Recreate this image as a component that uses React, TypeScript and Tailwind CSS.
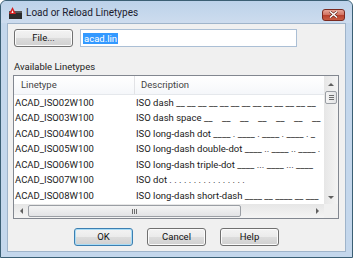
import React from 'react';

const rows = [
    { name: 'ACAD_ISO02W100', desc: 'ISO dash __ __ __ __ __ __ __ __ __ __ __ __ __' },
    { name: 'ACAD_ISO03W100', desc: 'ISO dash space __    __    __    __    __    __    __' },
    { name: 'ACAD_ISO04W100', desc: 'ISO long-dash dot ____ . ____ . ____ . ____ . _' },
    { name: 'ACAD_ISO05W100', desc: 'ISO long-dash double-dot ____ .. ____ .. ____ .' },
    { name: 'ACAD_ISO06W100', desc: 'ISO long-dash triple-dot ____ ... ____ ... ____' },
    { name: 'ACAD_ISO07W100', desc: 'ISO dot . . . . . . . . . . . . . . . .' },
    { name: 'ACAD_ISO08W100', desc: 'ISO long-dash short-dash ____ __ ____ __ ___' },
];

const Button = ({ label, primary }: { label: string; primary?: boolean }) => (
    <button
        className={
            'w-[59px] h-[18px] rounded-[3px] border text-[9.5px] text-[#111] leading-none bg-[linear-gradient(#f3f3f3_0%,#ebebeb_48%,#dcdcdc_52%,#d0d0d0_100%)] ' +
            (primary ? 'border-[#3c7fb1] shadow-[inset_0_0_0_1px_#a9dcf6]' : 'border-[#707070] shadow-[inset_0_0_0_1px_#fbfbfb]')
        }
    >
        {label}
    </button>
);

const Arrow = ({ dir }: { dir: 'up' | 'down' | 'left' | 'right' }) => {
    const pts = {
        up: '0,3 3,0 6,3',
        down: '0,0 3,3 6,0',
        left: '3,0 0,3 3,6',
        right: '0,0 3,3 0,6',
    }[dir];
    const vertical = dir === 'up' || dir === 'down';
    return (
        <svg width={vertical ? 6 : 3} height={vertical ? 3 : 6} viewBox={vertical ? '0 0 6 3' : '0 0 3 6'}>
            <polygon points={pts} fill="#606060" />
        </svg>
    );
};

export default function App() {
    return (
        <div className="w-[353px] h-[258px] font-[Roboto] bg-[#c4d7ec] border border-[#3b5f74] rounded-t-[6px] flex flex-col px-[6px] pb-[5px]">
            {/* title bar */}
            <div className="h-[22px] flex items-center shrink-0 bg-[linear-gradient(#bcd2ea,#cddcee)] -mx-[6px] px-[7px] rounded-t-[6px]">
                <svg width="15" height="14" viewBox="0 0 15 14" className="mt-[1px]">
                    <rect x="1" y="5" width="13" height="8" fill="#2b2b2b" />
                    <rect x="1" y="5" width="13" height="2" fill="#555" />
                    <polygon points="1,8 4.5,1 8,8" fill="#d42020" />
                    <polygon points="3.5,7 4.5,4 5.5,7" fill="#fff" />
                </svg>
                <span className="ml-[3px] text-[10px] text-[#1b1b2e] mt-[1px]">Load or Reload Linetypes</span>
                <div className="ml-auto mt-[5px] w-[23px] h-[12px] rounded-[3px] border border-[#7a2a20] bg-[linear-gradient(#e8a597,#d0705f_50%,#b83f2c_51%,#c85d44)] flex items-center justify-center">
                    <svg width="9" height="7" viewBox="0 0 9 7">
                        <path d="M1 0.5 L8 6.5 M8 0.5 L1 6.5" stroke="#5a1a12" strokeWidth="2.6" />
                        <path d="M1 0.5 L8 6.5 M8 0.5 L1 6.5" stroke="#fff" strokeWidth="1.5" />
                    </svg>
                </div>
            </div>

            {/* client */}
            <div className="flex-1 bg-[#f0f0f0] border border-[#9fb4ca] flex flex-col text-[9.5px] text-[#1a1a1a]">
                <div className="flex items-center pt-[5px] pl-[6px] h-[23px]">
                    <Button label="File..." />
                    <div className="ml-[7px] w-[217px] h-[18px] bg-white border border-[#abbfd5] flex items-center pl-[2px]">
                        <span className="bg-[#3399ff] text-white px-[1px] leading-[11px]">acad.lin</span>
                    </div>
                </div>

                <div className="mt-[13px] ml-[6px] text-[#222] leading-[13px]">Available Linetypes</div>

                {/* list */}
                <div className="mt-[2px] ml-[5px] w-[326px] h-[144px] border border-[#828790] bg-white flex flex-col">
                    <div className="flex-1 flex min-h-0">
                        <div className="flex-1 flex flex-col overflow-hidden">
                            <div className="h-[19px] shrink-0 flex bg-[linear-gradient(#ffffff,#f5f7fa)] border-b border-[#e5e8ec] text-[#444]">
                                <div className="w-[121px] shrink-0 pl-[7px] flex items-center border-r border-[#e2e3e6]">Linetype</div>
                                <div className="pl-[6px] flex items-center whitespace-nowrap">Description</div>
                            </div>
                            {rows.map((r) => (
                                <div key={r.name} className="h-[15.5px] shrink-0 flex items-center whitespace-pre">
                                    <div className="w-[121px] shrink-0 pl-[1px]">{r.name}</div>
                                    <div className="pl-[1px]">{r.desc}</div>
                                </div>
                            ))}
                        </div>
                        {/* vertical scrollbar */}
                        <div className="w-[14px] shrink-0 bg-[linear-gradient(90deg,#e6e6e6,#f4f4f4)] flex flex-col items-center">
                            <div className="h-[14px] flex items-center justify-center mt-[1px]">
                                <Arrow dir="up" />
                            </div>
                            <div className="w-[12px] h-[13px] rounded-[2px] border border-[#9a9ea4] bg-[linear-gradient(90deg,#f4f4f4,#e2e3e5)] flex flex-col items-center justify-center gap-[1px]">
                                <div className="w-[5px] h-px bg-[#6d6d6d]" />
                                <div className="w-[5px] h-px bg-[#6d6d6d]" />
                                <div className="w-[5px] h-px bg-[#6d6d6d]" />
                            </div>
                            <div className="mt-auto h-[14px] flex items-center justify-center">
                                <Arrow dir="down" />
                            </div>
                        </div>
                    </div>
                    {/* horizontal scrollbar */}
                    <div className="h-[14px] shrink-0 flex">
                        <div className="flex-1 flex items-center bg-[linear-gradient(#e6e6e6,#f4f4f4)]">
                            <div className="w-[14px] flex items-center justify-center">
                                <Arrow dir="left" />
                            </div>
                            <div className="w-[213px] h-[12px] rounded-[2px] border border-[#9a9ea4] bg-[linear-gradient(#f4f4f4,#e2e3e5)] flex items-center justify-center gap-[1px]">
                                <div className="h-[5px] w-px bg-[#6d6d6d]" />
                                <div className="h-[5px] w-px bg-[#6d6d6d]" />
                                <div className="h-[5px] w-px bg-[#6d6d6d]" />
                            </div>
                            <div className="ml-auto w-[14px] flex items-center justify-center">
                                <Arrow dir="right" />
                            </div>
                        </div>
                        <div className="w-[14px] bg-[#f0f0f0]" />
                    </div>
                </div>

                <div className="mt-[9px] flex pl-[66px] gap-[14px]">
                    <Button label="OK" primary />
                    <Button label="Cancel" />
                    <Button label="Help" />
                </div>
            </div>
        </div>
    );
}
